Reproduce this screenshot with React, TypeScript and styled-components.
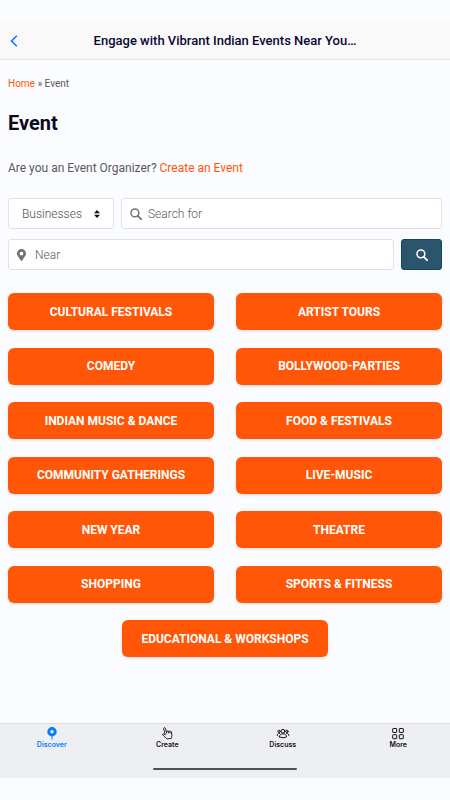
import React from "react";
import styled, { createGlobalStyle } from "styled-components";

const GlobalStyle = createGlobalStyle`
  *, *::before, *::after { box-sizing: border-box; }
  body {
    margin: 0;
    background: #fafcff;
    color: #5a5a5a;
    font-family: Roboto, "Liberation Sans", sans-serif;
    font-size: 12px;
    line-height: 18px;
  }
  h1, h2, p { margin: 0; }
  button, input, select { font: inherit; color: inherit; }
`;

const Screen = styled.div`
  display: flex;
  flex-direction: column;
  min-height: 100vh;
  padding: 22px 0;
`;

const TopBar = styled.header`
  display: grid;
  grid-template-columns: 28px 1fr 28px;
  align-items: center;
  height: 38px;
  background: #f9f9f9;
  border-bottom: 1px solid #e2e3e6;
`;

const BackButton = styled.button`
  display: flex;
  justify-content: center;
  padding: 0;
  border: 0;
  background: none;
  color: #0a6cff;
`;

const Title = styled.h1`
  color: #0b0733;
  font-size: 13px;
  font-weight: 500;
  text-align: center;
`;

const Content = styled.main`
  flex: 1;
  padding: 16px 8px;
`;

const Breadcrumb = styled.nav`
  font-size: 10px;
  line-height: 16px;
`;

const TextLink = styled.a`
  color: #ff5707;
  text-decoration: none;
`;

const Heading = styled.h2`
  margin-top: 18px;
  color: #0b0a22;
  font-size: 20px;
  font-weight: 700;
  line-height: 26px;
`;

const Prompt = styled.p`
  margin-top: 23px;
`;

const SearchForm = styled.form`
  display: flex;
  flex-direction: column;
  gap: 10px;
  margin-top: 21px;
`;

const FieldRow = styled.div`
  display: flex;
  gap: 7px;
`;

const Field = styled.label<{ $fixed?: boolean }>`
  display: flex;
  align-items: center;
  gap: 6px;
  flex: ${(p) => (p.$fixed ? "0 0 106px" : "1 1 0")};
  min-width: 0;
  height: 31px;
  padding: ${(p) => (p.$fixed ? "0 13px" : "0 8px")};
  border: 1px solid #dee2e6;
  border-radius: 3px;
  background: #fff;
  color: #6c757d;
`;

const Input = styled.input`
  flex: 1;
  min-width: 0;
  padding: 0;
  border: 0;
  outline: 0;
  background: none;
  font-weight: 300;
  &::placeholder { color: #565c62; opacity: 1; }
`;

const Select = styled.select`
  flex: 1;
  min-width: 0;
  padding: 0;
  border: 0;
  outline: 0;
  appearance: none;
  background: none;
  color: #495057;
  font-weight: 300;
`;

const IconSlot = styled.span`
  display: flex;
  justify-content: flex-start;
  width: 12px;
`;

const SearchButton = styled.button`
  display: flex;
  align-items: center;
  justify-content: center;
  flex: 0 0 41px;
  padding: 0;
  border: 1px solid #0e4768;
  border-radius: 3px;
  background: #2a556d;
  color: #fff;
`;

const CategoryGrid = styled.nav`
  display: grid;
  grid-template-columns: 1fr 1fr;
  align-content: space-between;
  column-gap: 22px;
  min-height: 364px;
  margin-top: 23px;
`;

const Category = styled.a<{ $centered?: boolean }>`
  display: flex;
  align-items: center;
  justify-content: center;
  height: 37px;
  border-radius: 6px;
  background: #ff5707;
  box-shadow: 0 1px 3px rgba(0, 0, 0, 0.16);
  color: #fff;
  font-weight: 700;
  text-decoration: none;
  text-transform: uppercase;
  ${(p) =>
    p.$centered &&
    "grid-column: 1 / -1; justify-self: center; width: calc(50% - 11px);"}
`;

const TabBar = styled.footer`
  display: flex;
  flex-direction: column;
  justify-content: space-between;
  height: 55px;
  padding-bottom: 8px;
  border-top: 1px solid #dcdee1;
  background: #eeeff2;
`;

const Tabs = styled.nav`
  display: grid;
  grid-template-columns: repeat(4, 1fr);
  gap: 12px;
`;

const Tab = styled.a<{ $active?: boolean }>`
  display: flex;
  flex-direction: column;
  align-items: center;
  padding-top: 2px;
  color: ${(p) => (p.$active ? "#087cff" : "#111")};
  font-family: Inter, "Liberation Sans", sans-serif;
  font-size: 7px;
  font-weight: 600;
  line-height: 10px;
  text-decoration: none;
`;

const HomeIndicator = styled.div`
  align-self: center;
  width: 32%;
  height: 2px;
  border-radius: 1px;
  background: #505153;
`;

const Magnifier = ({ size = 12 }: { size?: number }) => (
  <svg width={size} height={size} viewBox="0 0 12 12" fill="none" stroke="currentColor" aria-hidden="true">
    <circle cx="4.9" cy="4.9" r="3.9" strokeWidth="1.5" />
    <path d="M7.8 7.8l3.5 3.5" strokeWidth="1.8" strokeLinecap="round" />
  </svg>
);

const Pin = () => (
  <svg width="9" height="12" viewBox="0 0 384 512" fill="currentColor" aria-hidden="true">
    <path d="M172 502C27 291 0 270 0 192a192 192 0 01384 0c0 78-27 99-172 310-10 13-30 13-40 0zM192 272a80 80 0 100-160 80 80 0 000 160z" />
  </svg>
);

const SortArrows = () => (
  <svg width="6" height="8" viewBox="0 0 6 8" fill="#111" aria-hidden="true">
    <path d="M0 3.3L3 0l3 3.3zM0 4.7h6L3 8z" />
  </svg>
);

const DiscoverIcon = () => (
  <svg width="14" height="14" viewBox="0 0 14 14" fill="none" stroke="currentColor" aria-hidden="true">
    <circle cx="7" cy="5.8" r="3.2" strokeWidth="3" />
    <path d="M7 9.5v4" strokeWidth="1" />
  </svg>
);

const CreateIcon = () => (
  <svg width="14" height="14" viewBox="0 0 14 14" fill="none" stroke="currentColor" strokeWidth=".9" strokeLinejoin="round" strokeLinecap="round" aria-hidden="true">
    <path d="M5.2 8.7L3.7 2.8c-.3-1.3 1.3-1.7 1.7-.5l1 3.4c0-1 1.5-1.1 1.8-.2.2-.8 1.5-.7 1.7.2.3-.7 1.4-.5 1.6.3l.4 3.2c.1 1.5-.5 2-.6 3.2L7 13c-.5-1.2-2.7-2-4.2-4-.7-1 .5-1.8 1.3-1.1zM6.4 5.7l.3 1.4M8.2 5.5l.3 1.4M9.9 5.9l.2 1.2" />
  </svg>
);

const DiscussIcon = () => (
  <svg width="14" height="14" viewBox="0 0 14 14" fill="none" stroke="currentColor" strokeWidth="1" strokeLinecap="round" aria-hidden="true">
    <circle cx="7" cy="5.2" r="1.9" />
    <circle cx="3.1" cy="5.4" r="1.2" />
    <circle cx="10.9" cy="5.4" r="1.2" />
    <path d="M3.4 10.8C3.4 8.8 4.9 7.8 7 7.8s3.6 1 3.6 3c-2 1.2-5.2 1.2-7.2 0zM1.2 9.5c0-1.4.7-2.2 2.3-2.3M12.8 9.5c0-1.4-.7-2.2-2.3-2.3" />
  </svg>
);

const MoreIcon = () => (
  <svg width="14" height="14" viewBox="0 0 14 14" fill="none" stroke="currentColor" strokeWidth="1" aria-hidden="true">
    <rect x="1.7" y="2.5" width="4" height="4" rx=".5" />
    <rect x="8.3" y="2.5" width="4" height="4" rx=".5" />
    <rect x="1.7" y="8.7" width="4" height="4" rx=".5" />
    <rect x="8.3" y="8.7" width="4" height="4" rx=".5" />
  </svg>
);

const categories = [
  "Cultural Festivals",
  "Artist Tours",
  "Comedy",
  "Bollywood-Parties",
  "Indian Music & Dance",
  "Food & Festivals",
  "Community Gatherings",
  "Live-Music",
  "New Year",
  "Theatre",
  "Shopping",
  "Sports & Fitness",
  "Educational & Workshops",
];

const tabs = [
  { label: "Discover", Icon: DiscoverIcon },
  { label: "Create", Icon: CreateIcon },
  { label: "Discuss", Icon: DiscussIcon },
  { label: "More", Icon: MoreIcon },
];

export default function App() {
  return (
    <>
      <GlobalStyle />
      <Screen>
        <TopBar>
          <BackButton type="button" aria-label="Back">
            <svg width="8" height="12" viewBox="0 0 8 12" fill="none" stroke="currentColor" strokeWidth="1.5">
              <path d="M6.8.8L1.5 6l5.3 5.2" />
            </svg>
          </BackButton>
          <Title>Engage with Vibrant Indian Events Near You…</Title>
        </TopBar>
        <Content>
          <Breadcrumb aria-label="Breadcrumb">
            <TextLink href="#home">Home</TextLink> » Event
          </Breadcrumb>
          <Heading>Event</Heading>
          <Prompt>
            Are you an Event Organizer? <TextLink href="#create-event">Create an Event</TextLink>
          </Prompt>
          <SearchForm onSubmit={(e) => e.preventDefault()}>
            <FieldRow>
              <Field $fixed>
                <Select aria-label="Listing type" defaultValue="Businesses">
                  <option>Businesses</option>
                </Select>
                <SortArrows />
              </Field>
              <Field>
                <IconSlot>
                  <Magnifier />
                </IconSlot>
                <Input type="text" aria-label="Search for" placeholder="Search for" />
              </Field>
            </FieldRow>
            <FieldRow>
              <Field>
                <IconSlot>
                  <Pin />
                </IconSlot>
                <Input type="text" aria-label="Near" placeholder="Near" />
              </Field>
              <SearchButton type="submit" aria-label="Search">
                <Magnifier />
              </SearchButton>
            </FieldRow>
          </SearchForm>
          <CategoryGrid aria-label="Event categories">
            {categories.map((name, i) => (
              <Category
                key={name}
                href="#category"
                $centered={i === categories.length - 1 && i % 2 === 0}
              >
                {name}
              </Category>
            ))}
          </CategoryGrid>
        </Content>
        <TabBar>
          <Tabs aria-label="Main">
            {tabs.map(({ label, Icon }, i) => (
              <Tab key={label} href={`#${label.toLowerCase()}`} $active={i === 0}>
                <Icon />
                {label}
              </Tab>
            ))}
          </Tabs>
          <HomeIndicator />
        </TabBar>
      </Screen>
    </>
  );
}
